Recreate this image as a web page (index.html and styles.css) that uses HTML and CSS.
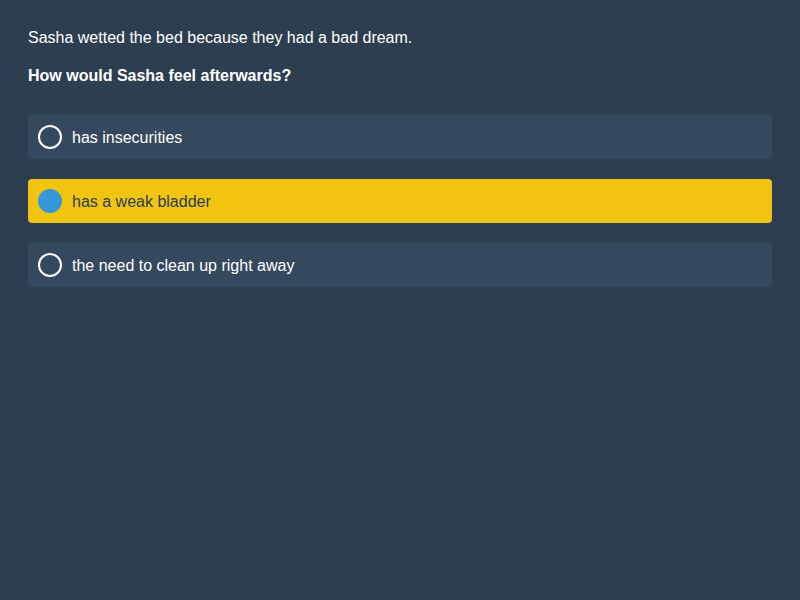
FILE: index.html
```html
<!DOCTYPE html>
<html>
<head>
<meta charset="utf-8">
<link rel="stylesheet" href="styles.css">
</head>
<body>
<div class="quiz">
  <p class="context">Sasha wetted the bed because they had a bad dream.</p>
  <p class="question">How would Sasha feel afterwards?</p>
  <div class="options">
    <div class="option"><span class="radio"></span><span class="label">has insecurities</span></div>
    <div class="option selected"><span class="radio"></span><span class="label">has a weak bladder</span></div>
    <div class="option"><span class="radio"></span><span class="label">the need to clean up right away</span></div>
  </div>
</div>
</body>
</html>
```
FILE: styles.css
```css
html, body {
  margin: 0;
  padding: 0;
  height: 100%;
  background: #2c3e50;
}
body {
  font-family: "Liberation Sans", Arial, sans-serif;
  font-size: 16px;
  color: #ffffff;
}
.quiz {
  padding: 29px 28px 28px;
}
.context, .question {
  margin: 0;
  line-height: 18px;
}
.question {
  font-weight: bold;
  margin-top: 20px;
}
.options {
  margin-top: 30px;
  display: flex;
  flex-direction: column;
  gap: 20px;
}
.option {
  height: 44px;
  box-sizing: border-box;
  display: flex;
  align-items: center;
  gap: 10px;
  padding: 0 10px;
  background: #34495e;
  border-radius: 4px;
}
.label {
  padding-top: 2px;
}
.radio {
  width: 24px;
  height: 24px;
  box-sizing: border-box;
  border: 2px solid #ffffff;
  border-radius: 50%;
  flex: none;
}
.option.selected {
  background: #f1c40f;
  color: #2c3e50;
}
.option.selected .radio {
  border: none;
  background: #3498db;
}
```
